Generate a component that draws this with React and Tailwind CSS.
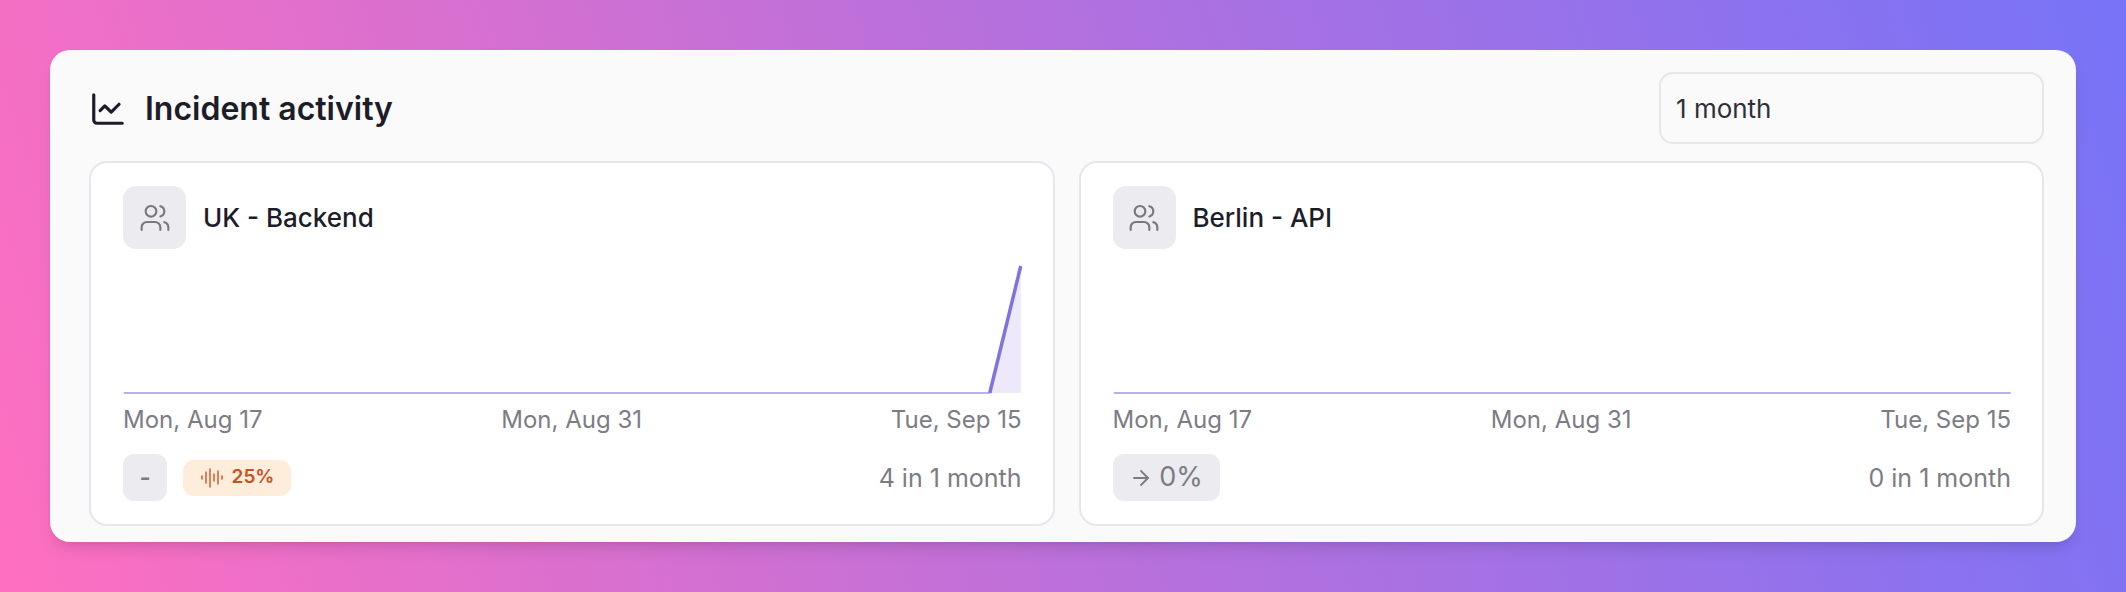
import { ArrowRight, AudioLines, ChartLine, Users } from "lucide-react";

const font = { fontFamily: "Inter, sans-serif" };

function Chart({ spike }) {
  return (
    <svg viewBox="0 0 897 130" className="block w-full h-[130px] mt-[15px]">
      {spike && <path d="M866 129 L897 2 L897 129 Z" fill="#ede9fa" />}
      <path
        d={spike ? "M0 129 L866 129" : "M0 129 L897 129"}
        fill="none"
        stroke="#a297e6"
        strokeWidth="1.5"
      />
      {spike && <path d="M866 129 L897 2" fill="none" stroke="#8072df" strokeWidth="3.5" />}
    </svg>
  );
}

function TeamCard({ name, spike, count, children }) {
  return (
    <div className="flex-1 h-[365px] bg-white border-2 border-[#e6e6ec] rounded-[18px] pl-[32px] pr-[31px] pt-[23px]">
      <div className="flex items-center gap-[17px]">
        <div className="w-[63px] h-[63px] rounded-[13px] bg-[#ebebf0] flex items-center justify-center">
          <Users size={32} strokeWidth={1.6} className="text-[#77777f]" />
        </div>
        <span className="text-[26px] font-medium text-[#1d1d29]">{name}</span>
      </div>
      <Chart spike={spike} />
      <div className="flex justify-between text-[24px] leading-[26px] text-[#7c7c85] mt-[13px]">
        <span>Mon, Aug 17</span>
        <span className="mr-[10px]">Mon, Aug 31</span>
        <span>Tue, Sep 15</span>
      </div>
      <div className="flex items-center justify-between mt-[21px]">
        <div className="flex items-center gap-[16px]">{children}</div>
        <span className="text-[25px] pt-[2px] text-[#7c7c85]">{count}</span>
      </div>
    </div>
  );
}

export default function App() {
  return (
    <div
      style={font}
      className="w-[2126px] h-[592px] overflow-hidden px-[50px] pt-[50px] bg-[linear-gradient(72deg,#ff6fc0_0%,#b770dc_50%,#7773f7_100%)]"
    >
      <div className="w-[2026px] h-[492px] bg-[#fafafa] rounded-[20px] shadow-lg pl-[39px] pr-[32px] pt-[22px]">
        <div className="flex items-center justify-between h-[72px]">
          <div className="flex items-center gap-[18px] pt-[2px]">
            <ChartLine size={38} strokeWidth={2} className="text-[#1d1d29]" />
            <h2 className="text-[32px] font-semibold text-[#1d1d29]">Incident activity</h2>
          </div>
          <div className="w-[385px] h-[72px] border-2 border-[#e6e6eb] rounded-[14px] flex items-center px-[15px] text-[26px] text-[#2f2f3a]">
            1 month
          </div>
        </div>
        <div className="flex gap-[24px] mt-[17px]">
          <TeamCard name="UK - Backend" spike count="4 in 1 month">
            <div className="w-[44px] h-[47px] rounded-[11px] bg-[#ebebf0] flex items-center justify-center text-[24px] font-semibold text-[#7c7c85]">
              -
            </div>
            <div className="h-[36px] w-[108px] rounded-[11px] bg-[#ffeddb] flex items-center justify-center gap-[8px] text-[19px] font-semibold text-[#c94f1f]">
              <AudioLines size={24} strokeWidth={1.6} className="text-[#d5653a]" />
              25%
            </div>
          </TeamCard>
          <TeamCard name="Berlin - API" count="0 in 1 month">
            <div className="w-[107px] h-[47px] rounded-[11px] bg-[#ebebf0] flex items-center justify-center gap-[6px] text-[27px] text-[#7c7c85]">
              <ArrowRight size={24} strokeWidth={1.8} />
              0%
            </div>
          </TeamCard>
        </div>
      </div>
    </div>
  );
}
